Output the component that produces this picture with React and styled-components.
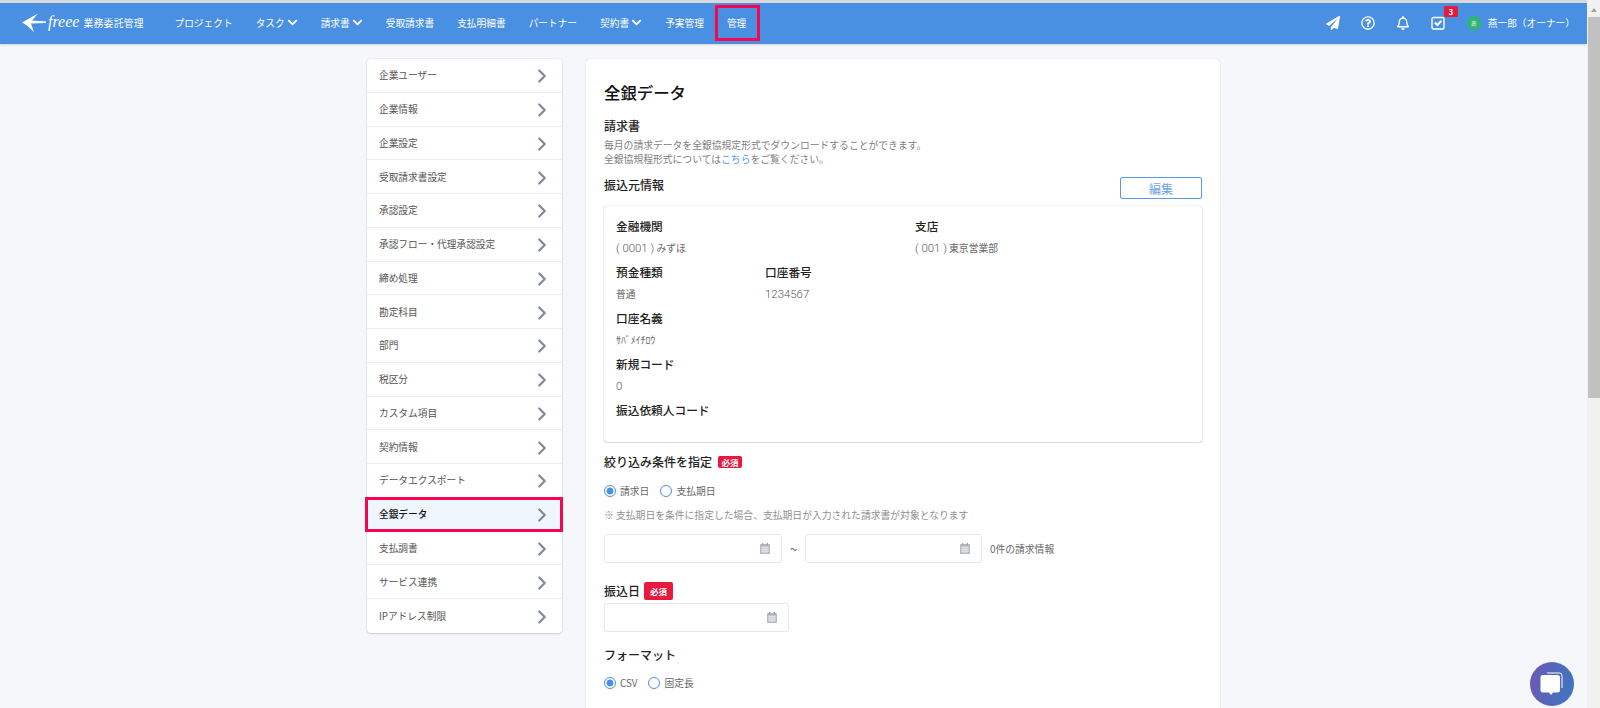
import styled, { createGlobalStyle } from "styled-components";
import {
  FaChevronDown,
  FaPaperPlane,
  FaRegBell,
  FaRegQuestionCircle,
} from "react-icons/fa";
import { LuChevronRight } from "react-icons/lu";

const GlobalStyle = createGlobalStyle`
  html, body {
    margin: 0;
    height: 708px;
    overflow: hidden;
    background: #fff;
    font-family: "Noto Sans CJK JP", "Noto Sans", sans-serif;
    font-size: 9.8px;
    color: #555;
  }
  * { box-sizing: border-box; }
`;

const Shell = styled.div`
  display: flex;
  height: 708px;
`;

const Page = styled.div`
  flex: 1;
  min-width: 0;
  background: #f5f7fb;
  overflow: hidden;
  border-top: 3px solid #d8d9db;
`;

const Scrollbar = styled.div`
  width: 13px;
  background: #f1f1f1;
  display: flex;
  flex-direction: column;
  padding: 3px 0 0 1px;
`;

const ScrollArrow = styled.div`
  height: 14px;
  display: flex;
  justify-content: center;
  align-items: center;
  &::before {
    content: "";
    border-left: 3.5px solid transparent;
    border-right: 3.5px solid transparent;
    border-bottom: 4px solid #a3a3a3;
  }
`;

const ScrollThumb = styled.div`
  height: 381px;
  background: #c1c1c1;
`;

const Header = styled.header`
  height: 41px;
  background: #4a90e2;
  display: flex;
  align-items: center;
  padding: 0 12px 2px 22px;
  color: #fff;
  box-shadow: 0 1px 2px rgba(40, 60, 90, 0.18);
`;

const Logo = styled.div`
  display: flex;
  align-items: center;
  width: 152.5px;
`;

const LogoWord = styled.span`
  font-family: "Liberation Serif", serif;
  font-style: italic;
  font-size: 16px;
  line-height: 1;
  margin: -2px 4px 0 2px;
`;

const LogoText = styled.span`
  font-size: 9.8px;
  letter-spacing: 0.3px;
`;

const Nav = styled.nav`
  display: flex;
  align-items: center;
  height: 100%;
  gap: 23px;
`;

const NavItem = styled.a`
  position: relative;
  display: flex;
  align-items: center;
  gap: 2px;
  font-size: 9.7px;
  white-space: nowrap;
  color: #fff;

  ${(p) =>
    p.$marked &&
    `
    &::after {
      content: "";
      position: absolute;
      inset: -11px -14px -11px -12px;
      border: 3.5px solid #f5064f;
    }
  `}
`;

const HeaderRight = styled.div`
  margin-left: auto;
  display: flex;
  align-items: center;
  color: #fff;
`;

const HeaderIcon = styled.span`
  position: relative;
  width: 35px;
  display: flex;
  justify-content: center;
  font-size: 14px;
`;

const CountBadge = styled.span`
  position: absolute;
  top: -10px;
  left: 23px;
  width: 14px;
  height: 11px;
  background: #e6193f;
  font-size: 8px;
  font-weight: 700;
  line-height: 11px;
  text-align: center;
  border-radius: 1px;
`;

const Avatar = styled.span`
  width: 14px;
  height: 14px;
  border-radius: 50%;
  background: #2fb673;
  font-size: 5px;
  line-height: 14px;
  text-align: center;
  margin: 0 7px 0 11px;
`;

const UserName = styled.span`
  font-size: 9.7px;
  white-space: nowrap;
`;

const Main = styled.main`
  display: flex;
  justify-content: center;
  align-items: flex-start;
  gap: 24px;
  padding-top: 15px;
`;

const Sidebar = styled.ul`
  list-style: none;
  margin: 0;
  padding: 0;
  width: 195px;
  background: #fff;
  border-radius: 4px;
  box-shadow: 0 0 1px rgba(60, 70, 90, 0.4), 0 1px 2px rgba(60, 70, 90, 0.2);
`;

const SideItem = styled.li`
  position: relative;
  height: 33.76px;
  padding: 0 9px 0 12px;
  display: flex;
  align-items: center;
  justify-content: space-between;
  font-size: 9.7px;
  color: ${(p) => (p.$active ? "#111" : "#555")};
  font-weight: ${(p) => (p.$active ? 500 : 400)};
  background: ${(p) => (p.$active ? "#eff6fd" : "#fff")};
  border-bottom: 1.5px solid #eceef1;
  border-radius: ${(p) => (p.$first ? "4px 4px 0 0" : "0")};

  &:last-child {
    border-bottom: 0;
    border-radius: 0 0 4px 4px;
  }

  ${(p) =>
    p.$active &&
    `
    &::after {
      content: "";
      position: absolute;
      inset: -1px -1px -1px -2px;
      border: 3.5px solid #f5064f;
    }
  `}

  svg {
    color: #7d8a99;
    font-size: 22px;
    stroke-width: 2.4;
    transform: translateY(1px);
  }
`;

const Card = styled.section`
  width: 634px;
  height: 660px;
  background: #fff;
  border-radius: 4px;
  box-shadow: 0 0 1px rgba(60, 70, 90, 0.4);
  padding: 22px 18px 0;
`;

const Title = styled.h1`
  margin: 0;
  font-size: 16.4px;
  line-height: 22px;
  font-weight: 500;
  color: #111;
`;

const Heading = styled.h2`
  margin: ${(p) => p.$mt || 0}px 0 0;
  font-size: 12px;
  line-height: 16px;
  font-weight: 500;
  color: #222;
  display: flex;
  align-items: center;
`;

const Help = styled.p`
  margin: 4px 0 0;
  font-size: 9.8px;
  line-height: 14px;
  color: #808080;

  a {
    color: #5a9be6;
  }
`;

const SourceHead = styled.div`
  margin-top: 11px;
  display: flex;
  justify-content: space-between;
  align-items: flex-start;
`;

const EditButton = styled.button`
  width: 82px;
  height: 22px;
  background: #fff;
  border: 1px solid #5b9ae6;
  border-radius: 2px;
  color: #6ea4ea;
  font: inherit;
  font-size: 12px;
  padding: 0;
`;

const InfoBox = styled.div`
  margin-top: 7px;
  height: 236px;
  padding: 8px 12px;
  border-radius: 3px;
  background: #fff;
  box-shadow: 0 0 1px rgba(60, 70, 90, 0.55), 0 1px 1px rgba(60, 70, 90, 0.15);
  display: grid;
  grid-template-columns: 149px 150px 1fr;
  grid-auto-rows: 46px;
`;

const Field = styled.div`
  grid-column: span ${(p) => p.$span || 1};
`;

const FieldLabel = styled.div`
  height: 23px;
  line-height: 23px;
  font-size: 11.7px;
  font-weight: 500;
  color: #222;
`;

const FieldValue = styled.div`
  height: 23px;
  line-height: 23px;
  font-size: 9.8px;
  color: #666;
`;

const Digits = styled.span`
  font-family: Roboto, sans-serif;
  font-size: 11.4px;
  font-weight: 300;
  color: #555;
`;

const Required = styled.span`
  display: inline-block;
  margin-left: ${(p) => (p.$large ? 4 : 6)}px;
  width: ${(p) => (p.$large ? 29 : 24)}px;
  height: ${(p) => (p.$large ? 18 : 12)}px;
  line-height: ${(p) => (p.$large ? 18 : 12)}px;
  background: #e6193f;
  border-radius: 2px;
  color: #fff;
  font-size: 8.5px;
  font-weight: 700;
  text-align: center;
`;

const RadioRow = styled.div`
  margin-top: ${(p) => p.$mt}px;
  display: flex;
  align-items: center;
  height: 16px;
  gap: 11px;
`;

const RadioLabel = styled.label`
  display: flex;
  align-items: center;
  gap: 4px;
  font-size: 9.8px;
  color: #666;
`;

const RadioDot = styled.span`
  width: 12px;
  height: 12px;
  border-radius: 50%;
  border: 1px solid #4a90e2;
  background: ${(p) =>
    p.$on ? "radial-gradient(circle, #4a90e2 0 3.2px, #fff 3.8px)" : "#fff"};
`;

const Note = styled.p`
  margin: 8px 0 0;
  font-size: 9.8px;
  line-height: 16px;
  color: #909090;
`;

const DateRow = styled.div`
  margin-top: 11px;
  display: flex;
  align-items: center;
`;

const DateInput = styled.div`
  width: ${(p) => p.$w}px;
  height: 29px;
  background: #fff;
  border: 1px solid #e4e8ec;
  border-radius: 3px;
  display: flex;
  align-items: center;
  justify-content: flex-end;
  padding-right: 11px;
`;

const Tilde = styled.span`
  width: 23px;
  text-align: center;
  font-size: 13px;
  color: #666;
`;

const Count = styled.span`
  margin-left: 8px;
  font-size: 9.8px;
  color: #666;
`;

const TransferHead = styled(Heading)`
  margin-top: 19px;
  line-height: 18px;
`;

const TransferInput = styled.div`
  margin-top: 3px;
`;

const ChatButton = styled.button`
  position: fixed;
  left: 1530px;
  top: 662px;
  width: 44px;
  height: 44px;
  border: 0;
  padding: 0;
  border-radius: 50%;
  background: linear-gradient(100deg, #6c58b4, #3a78c2);
  display: flex;
  align-items: center;
  justify-content: center;
`;

const navItems = [
  { label: "プロジェクト" },
  { label: "タスク", menu: true },
  { label: "請求書", menu: true },
  { label: "受取請求書" },
  { label: "支払明細書" },
  { label: "パートナー" },
  { label: "契約書", menu: true },
  { label: "予実管理" },
  { label: "管理", marked: true },
];

const sideItems = [
  "企業ユーザー",
  "企業情報",
  "企業設定",
  "受取請求書設定",
  "承認設定",
  "承認フロー・代理承認設定",
  "締め処理",
  "勘定科目",
  "部門",
  "税区分",
  "カスタム項目",
  "契約情報",
  "データエクスポート",
  "全銀データ",
  "支払調書",
  "サービス連携",
  "IPアドレス制限",
];

function LogoBird() {
  return (
    <svg width="24" height="20" viewBox="0 0 24 20" fill="#fff">
      <path d="M0 9.5 L16 0.5 L10 7.6 L24 8.4 V10 L9 10.6 L12 19 L5 12.5 Z" />
    </svg>
  );
}

function CalendarIcon() {
  return (
    <svg width="10" height="11" viewBox="0 0 10 11">
      <rect x="0" y="1" width="10" height="10" rx="1" fill="#b4b9bf" />
      <rect x="2" y="0" width="1.4" height="2.4" fill="#9da3a9" />
      <rect x="6.6" y="0" width="1.4" height="2.4" fill="#9da3a9" />
      <path
        d="M1 4.2 H9 M1 6.2 H9 M1 8.2 H9 M3 4 V10 M5 4 V10 M7 4 V10"
        stroke="#eef0f2"
        strokeWidth="0.8"
      />
    </svg>
  );
}

function TaskIcon() {
  return (
    <svg width="14" height="14" viewBox="0 0 14 14" fill="none" stroke="#fff">
      <rect x="1" y="1.5" width="12" height="11.5" rx="1.5" strokeWidth="1.4" />
      <path d="M3.8 6.5 L6.4 9 L10.4 4.8" strokeWidth="2" />
    </svg>
  );
}

function Radio({ on, children }) {
  return (
    <RadioLabel>
      <RadioDot $on={on} />
      {children}
    </RadioLabel>
  );
}

export default function App() {
  return (
    <>
      <GlobalStyle />
      <Shell>
        <Page>
          <Header>
            <Logo>
              <LogoBird />
              <LogoWord>freee</LogoWord>
              <LogoText>業務委託管理</LogoText>
            </Logo>
            <Nav>
              {navItems.map((item) => (
                <NavItem key={item.label} $marked={item.marked}>
                  {item.label}
                  {item.menu && <FaChevronDown size={11} />}
                </NavItem>
              ))}
            </Nav>
            <HeaderRight>
              <HeaderIcon>
                <FaPaperPlane />
              </HeaderIcon>
              <HeaderIcon>
                <FaRegQuestionCircle />
              </HeaderIcon>
              <HeaderIcon>
                <FaRegBell />
              </HeaderIcon>
              <HeaderIcon>
                <TaskIcon />
                <CountBadge>3</CountBadge>
              </HeaderIcon>
              <Avatar>燕</Avatar>
              <UserName>燕一郎（オーナー）</UserName>
            </HeaderRight>
          </Header>

          <Main>
            <Sidebar>
              {sideItems.map((label, i) => (
                <SideItem key={label} $first={i === 0} $active={label === "全銀データ"}>
                  {label}
                  <LuChevronRight />
                </SideItem>
              ))}
            </Sidebar>

            <Card>
              <Title>全銀データ</Title>
              <Heading $mt={15}>請求書</Heading>
              <Help>
                毎月の請求データを全銀協規定形式でダウンロードすることができます。
                <br />
                全銀協規程形式については<a>こちら</a>をご覧ください。
              </Help>
              <SourceHead>
                <Heading>振込元情報</Heading>
                <EditButton>編集</EditButton>
              </SourceHead>
              <InfoBox>
                <Field $span={2}>
                  <FieldLabel>金融機関</FieldLabel>
                  <FieldValue>
                    <Digits>( 0001 )</Digits> みずほ
                  </FieldValue>
                </Field>
                <Field>
                  <FieldLabel>支店</FieldLabel>
                  <FieldValue>
                    <Digits>( 001 )</Digits> 東京営業部
                  </FieldValue>
                </Field>
                <Field>
                  <FieldLabel>預金種類</FieldLabel>
                  <FieldValue>普通</FieldValue>
                </Field>
                <Field $span={2}>
                  <FieldLabel>口座番号</FieldLabel>
                  <FieldValue>
                    <Digits>1234567</Digits>
                  </FieldValue>
                </Field>
                <Field $span={3}>
                  <FieldLabel>口座名義</FieldLabel>
                  <FieldValue>ｻﾊﾞﾒｲﾁﾛｳ</FieldValue>
                </Field>
                <Field $span={3}>
                  <FieldLabel>新規コード</FieldLabel>
                  <FieldValue>
                    <Digits>0</Digits>
                  </FieldValue>
                </Field>
                <Field $span={3}>
                  <FieldLabel>振込依頼人コード</FieldLabel>
                </Field>
              </InfoBox>

              <Heading $mt={12}>
                絞り込み条件を指定<Required>必須</Required>
              </Heading>
              <RadioRow $mt={13}>
                <Radio on>請求日</Radio>
                <Radio>支払期日</Radio>
              </RadioRow>
              <Note>※ 支払期日を条件に指定した場合、支払期日が入力された請求書が対象となります</Note>
              <DateRow>
                <DateInput $w={178}>
                  <CalendarIcon />
                </DateInput>
                <Tilde>~</Tilde>
                <DateInput $w={177}>
                  <CalendarIcon />
                </DateInput>
                <Count>0件の請求情報</Count>
              </DateRow>

              <TransferHead>
                振込日<Required $large>必須</Required>
              </TransferHead>
              <TransferInput>
                <DateInput $w={185}>
                  <CalendarIcon />
                </DateInput>
              </TransferInput>

              <Heading $mt={15}>フォーマット</Heading>
              <RadioRow $mt={12}>
                <Radio on>CSV</Radio>
                <Radio>固定長</Radio>
              </RadioRow>
            </Card>
          </Main>
        </Page>
        <Scrollbar>
          <ScrollArrow />
          <ScrollThumb />
        </Scrollbar>
        <ChatButton aria-label="チャット">
          <svg width="26" height="26" viewBox="0 0 26 26">
            <path d="M8 2 H20.5 A2.5 2.5 0 0 1 23 4.5 V17" fill="none" stroke="#fff" strokeWidth="1" />
            <path
              d="M4 4 H18.5 A2.5 2.5 0 0 1 21 6.5 V19 A2.5 2.5 0 0 1 18.5 21.5 H14 L12 24 L10 21.5 H4 A2.5 2.5 0 0 1 1.5 19 V6.5 A2.5 2.5 0 0 1 4 4 Z"
              fill="#fff"
            />
          </svg>
        </ChatButton>
      </Shell>
    </>
  );
}
